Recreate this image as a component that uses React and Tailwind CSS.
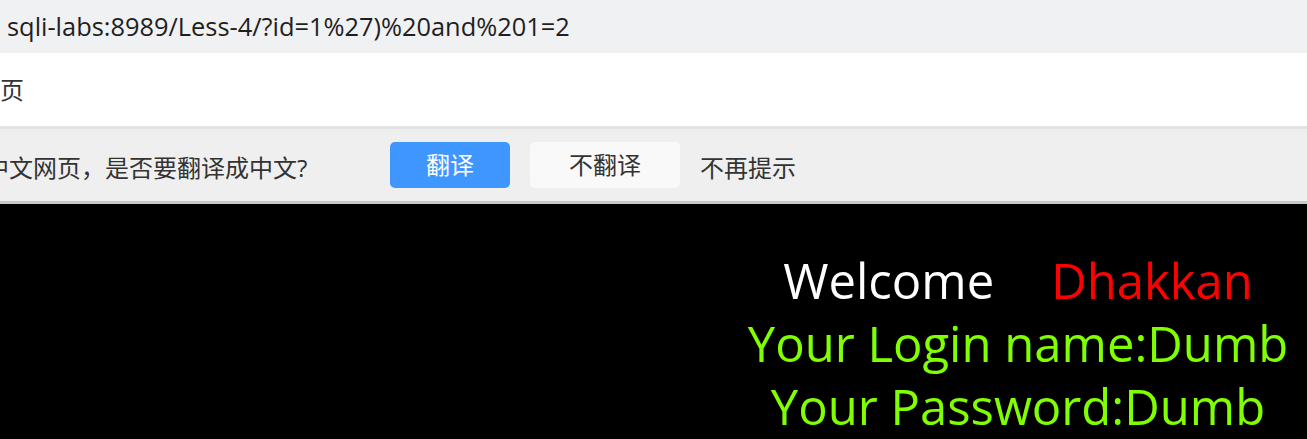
export default function App() {
  const cjk = { fontFamily: '"Open Sans", "Noto Sans CJK SC", sans-serif' };
  return (
    <div className="w-[1307px] h-[439px] overflow-hidden flex flex-col bg-black" style={cjk}>
      {/* address bar */}
      <div className="h-[53px] bg-[#f0f1f3] flex items-center pl-[7px] text-[25.4px] text-[#1f1f1f] whitespace-nowrap">
        sqli-labs:8989/Less-4/?id=1%27)%20and%201=2
      </div>
      {/* page title strip */}
      <div className="h-[73px] bg-white flex items-center text-[24px] text-[#333] whitespace-nowrap">
        <span className="-ml-[72px]">中文网页</span>
      </div>
      {/* translate bar */}
      <div className="h-[78px] bg-[#efefef] border-t-[3px] border-b-[3px] border-t-[#e2e2e2] border-b-[#c8c8c8] flex items-center text-[24px] text-[#333] whitespace-nowrap">
        <div className="w-[390px] shrink-0 pt-[6px]">
          <span className="-ml-[15px]">中文网页，是否要翻译成中文?</span>
        </div>
        <button className="w-[120px] h-[46px] rounded-[5px] bg-[#4096ff] text-white text-[24px]">
          翻译
        </button>
        <button className="ml-[20px] w-[150px] h-[46px] rounded-[5px] bg-[#f9f9f9] text-[#333] text-[24px]">
          不翻译
        </button>
        <span className="ml-[20px] pt-[6px]">不再提示</span>
      </div>
      {/* page body */}
      <div className="flex-1 bg-black pl-[729px] pt-[45px] text-center text-[49px] leading-[63px]">
        <div>
          <span className="text-white">Welcome</span>
          <span className="text-[#ff0000] ml-[57px]">Dhakkan</span>
        </div>
        <div className="text-[#7fff00]">Your Login name:Dumb</div>
        <div className="text-[#7fff00]">Your Password:Dumb</div>
      </div>
    </div>
  );
}
